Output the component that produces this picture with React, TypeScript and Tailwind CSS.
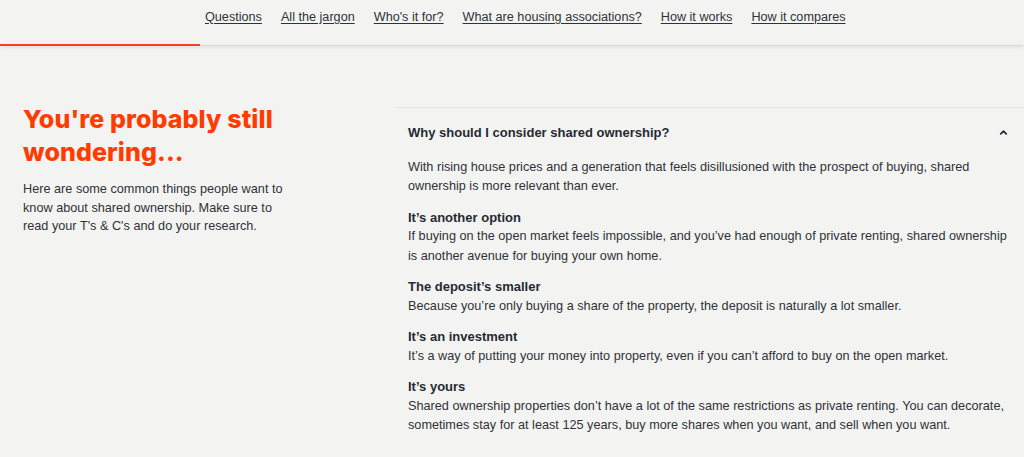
import { ChevronUp } from 'lucide-react'

const NAV = [
  'Questions',
  'All the jargon',
  "Who's it for?",
  'What are housing associations?',
  'How it works',
  'How it compares',
]

const POINTS = [
  {
    title: 'It’s another option',
    body: (
      <>
        If buying on the open market feels impossible, and you’ve had enough of
        private renting, shared ownership
        <br />
        is another avenue for buying your own home.
      </>
    ),
  },
  {
    title: 'The deposit’s smaller',
    body: 'Because you’re only buying a share of the property, the deposit is naturally a lot smaller.',
  },
  {
    title: 'It’s an investment',
    body: 'It’s a way of putting your money into property, even if you can’t afford to buy on the open market.',
  },
  {
    title: 'It’s yours',
    body: 'Shared ownership properties don’t have a lot of the same restrictions as private renting. You can decorate, sometimes stay for at least 125 years, buy more shares when you want, and sell when you want.',
  },
]

export default function App() {
  return (
    <div
      className="h-[457px] w-[1024px] overflow-hidden bg-[#f3f4f2] text-[#2f3237]"
      style={{ fontFamily: '"Liberation Sans", Arial, sans-serif' }}
    >
      <header className="relative h-[46px] border-b border-[#d9dbd8] shadow-[0_2px_3px_rgba(0,0,0,0.06)]">
        <nav className="flex h-[34px] items-center gap-[19px] pl-[205px] text-[12.65px]">
          {NAV.map((n) => (
            <a key={n} className="underline underline-offset-2 text-[#2f3237]">
              {n}
            </a>
          ))}
        </nav>
        <div className="absolute bottom-[-1px] left-0 h-[2px] w-[200px] bg-[#f2411b]" />
      </header>

      <main className="flex items-start pt-[57px]">
        <section className="w-[395px] pl-[23px]">
          <h1
            className="text-[25px] font-extrabold leading-[33px] tracking-[0.1px] text-[#ff3c00]"
            style={{ fontFamily: 'Inter, sans-serif' }}
          >
            You're probably still
            <br />
            wondering...
          </h1>
          <p className="mt-[11px] w-[268px] text-[12.7px] leading-[18.5px] text-[#2f3237]">
            Here are some common things people want to know about shared
            ownership. Make sure to read your T's &amp; C's and do your research.
          </p>
        </section>

        <section className="mt-[4px] flex-1 border-t border-[#e2e4e1]">
          <div className="flex items-center justify-between pl-[13px] pr-[15px] pt-[15px]">
            <h2 className="text-[13px] font-bold text-[#262a33]">
              Why should I consider shared ownership?
            </h2>
            <ChevronUp size={11} strokeWidth={4} className="text-[#2a2f3a]" />
          </div>
          <div className="pl-[13px] pt-[15px] text-[12.7px] leading-[19.5px]">
            <p>
              With rising house prices and a generation that feels disillusioned
              with the prospect of buying, shared ownership is more relevant than
              ever.
            </p>
            {POINTS.map((p) => (
              <div key={p.title} className="mt-[11px]">
                <h3 className="text-[13px] font-bold text-[#262a33]">{p.title}</h3>
                <p>{p.body}</p>
              </div>
            ))}
          </div>
        </section>
      </main>
    </div>
  )
}
